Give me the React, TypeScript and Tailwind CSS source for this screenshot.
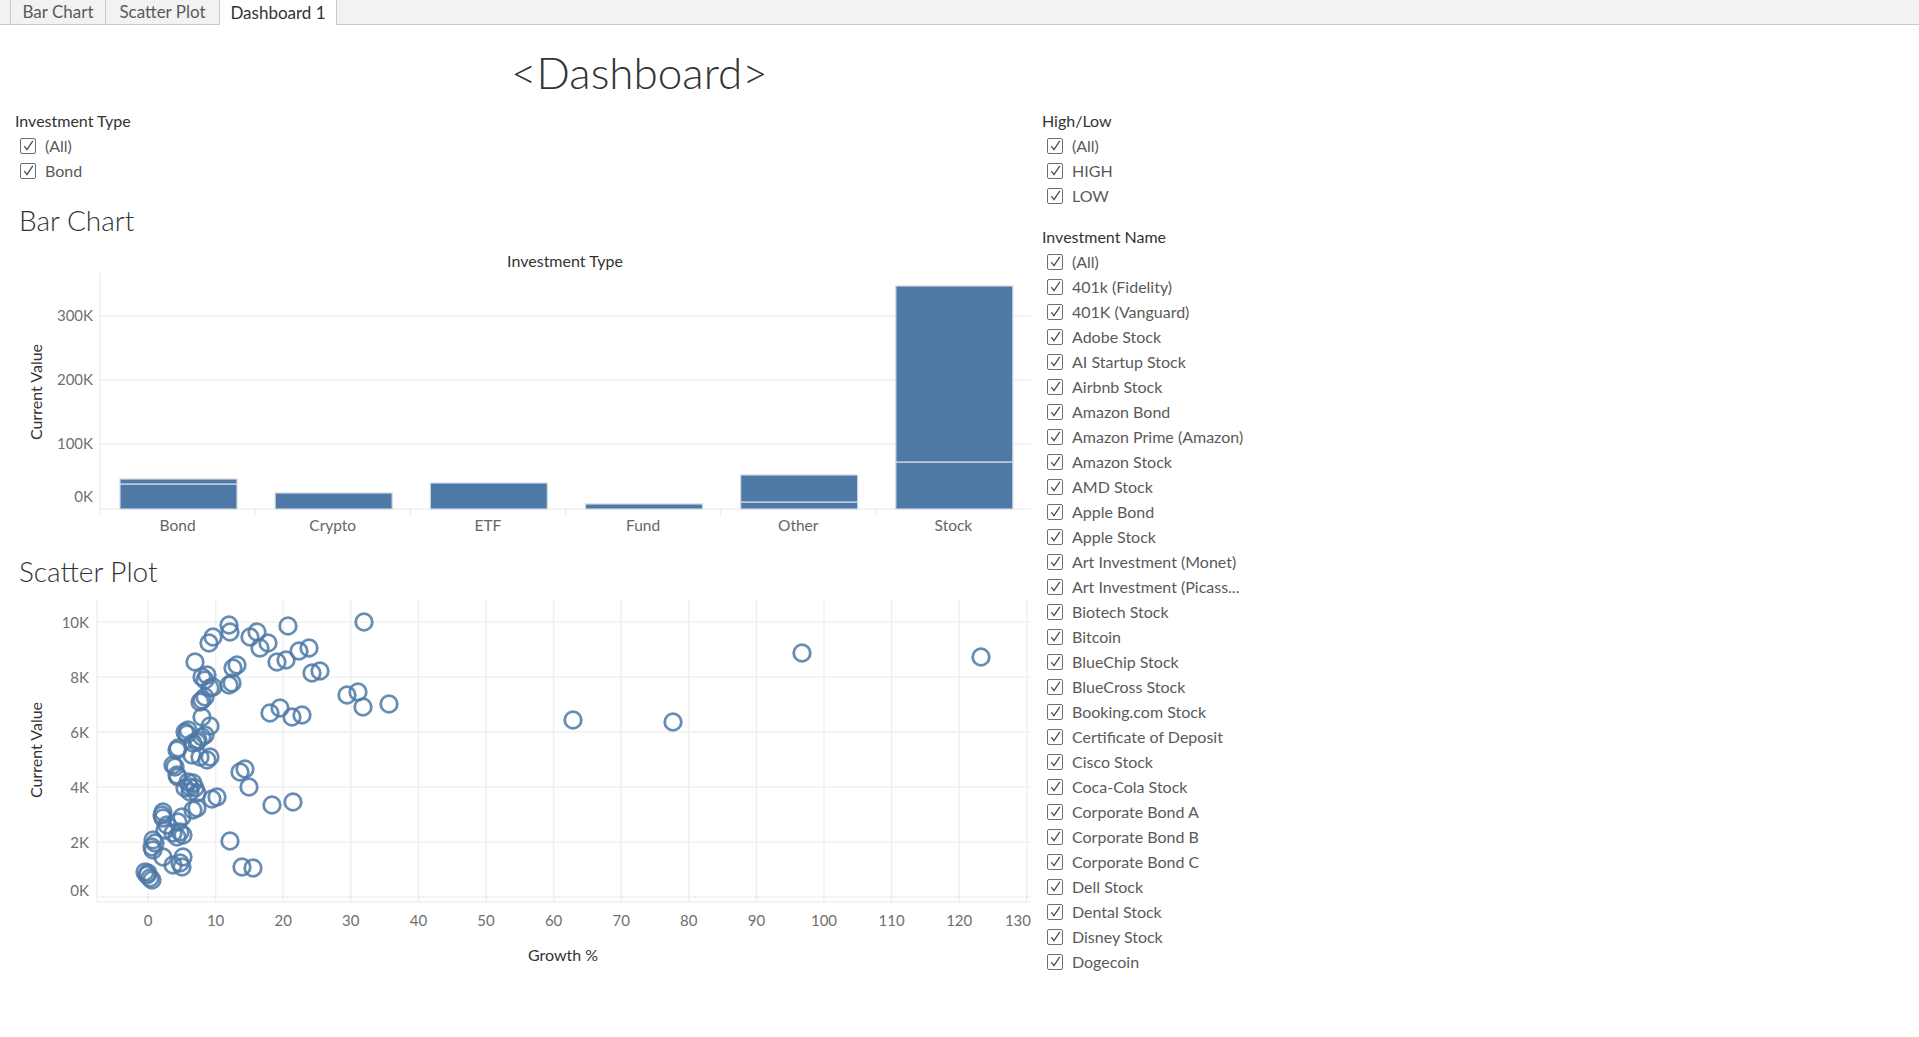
import React from "react";

const BLUE = "#4e79a7";

function CheckBox() {
  return (
    <span className="flex h-[16px] w-[16px] shrink-0 items-center justify-center rounded-[2px] border-[1.5px] border-[#6f6f6f] bg-white">
      <svg viewBox="0 0 13 13" className="h-[13px] w-[13px]">
        <path d="M2.3 7 L5 10.6 L10.8 1.8" fill="none" stroke="#4a4a4a" strokeWidth="1.25" />
      </svg>
    </span>
  );
}

function FilterRow({ label }: { label: string }) {
  return (
    <div className="flex h-[25px] items-center gap-[9px] pl-[5px]">
      <CheckBox />
      <span className="whitespace-nowrap text-[16px] text-[#5a5a5a]">{label}</span>
    </div>
  );
}

function FilterGroup({ title, items }: { title: string; items: string[] }) {
  return (
    <div className="flex flex-col">
      <div className="flex h-[25px] items-center text-[16px] text-[#333]">{title}</div>
      {items.map((it) => (
        <FilterRow key={it} label={it} />
      ))}
    </div>
  );
}

const names = [
  "(All)",
  "401k (Fidelity)",
  "401K (Vanguard)",
  "Adobe Stock",
  "AI Startup Stock",
  "Airbnb Stock",
  "Amazon Bond",
  "Amazon Prime (Amazon)",
  "Amazon Stock",
  "AMD Stock",
  "Apple Bond",
  "Apple Stock",
  "Art Investment (Monet)",
  "Art Investment (Picass...",
  "Biotech Stock",
  "Bitcoin",
  "BlueChip Stock",
  "BlueCross Stock",
  "Booking.com Stock",
  "Certificate of Deposit",
  "Cisco Stock",
  "Coca-Cola Stock",
  "Corporate Bond A",
  "Corporate Bond B",
  "Corporate Bond C",
  "Dell Stock",
  "Dental Stock",
  "Disney Stock",
  "Dogecoin",
];

// Bar chart data (values in K, stacked segments bottom -> top)
const bars: { label: string; segs: number[] }[] = [
  { label: "Bond", segs: [38.9, 7.7] },
  { label: "Crypto", segs: [24.9] },
  { label: "ETF", segs: [40.4] },
  { label: "Fund", segs: [7.8] },
  { label: "Other", segs: [10.9, 42] },
  { label: "Stock", segs: [73.1, 273.6] },
];

function BarChart() {
  // svg top corresponds to page y=237
  const base = 272;
  const pxPerK = 0.6433;
  const x0 = 100;
  const x1 = 1031;
  const catW = (x1 - x0) / 6;
  return (
    <svg width={1035} height={308} className="block">
      <text x={565} y={23} textAnchor="middle" dominantBaseline="central" fontSize={16} fill="#333">
        Investment Type
      </text>
      <text
        x={35}
        y={155}
        textAnchor="middle"
        dominantBaseline="central"
        fontSize={16}
        fill="#333"
        transform="rotate(-90 35 155)"
      >
        Current Value
      </text>
      {[79, 143, 207].map((y) => (
        <line key={y} x1={x0} x2={x1} y1={y} y2={y} stroke="#f0f0f0" strokeWidth={1.5} />
      ))}
      <line x1={x0} x2={x0} y1={36} y2={278} stroke="#e8e8e8" strokeWidth={1} />
      <line x1={x0} x2={x1} y1={base} y2={base} stroke="#e8e8e8" strokeWidth={1} />
      {[1, 2, 3, 4, 5].map((i) => (
        <line key={i} x1={x0 + catW * i} x2={x0 + catW * i} y1={base} y2={278} stroke="#e8e8e8" strokeWidth={1} />
      ))}
      {[
        ["300K", 78],
        ["200K", 142],
        ["100K", 206],
        ["0K", 259],
      ].map(([t, y]) => (
        <text key={t as string} x={93} y={y as number} textAnchor="end" dominantBaseline="central" fontSize={15} fill="#707070">
          {t}
        </text>
      ))}
      {bars.map((b, i) => {
        const bx = x0 + catW * i + 20;
        let acc = 0;
        return (
          <g key={b.label}>
            {b.segs.map((s, j) => {
              const yTop = base - (acc + s) * pxPerK;
              const h = s * pxPerK;
              acc += s;
              return (
                <rect
                  key={j}
                  x={bx}
                  y={yTop}
                  width={117}
                  height={h}
                  fill={BLUE}
                  stroke="#d3d9e1"
                  strokeWidth={1.2}
                />
              );
            })}
            <text x={x0 + catW * i + catW / 2} y={288} textAnchor="middle" dominantBaseline="central" fontSize={15.5} fill="#666">
              {b.label}
            </text>
          </g>
        );
      })}
    </svg>
  );
}

// scatter points in page pixel coords (converted inside the chart)
const pts: [number, number][] = [
  [229, 625], [230, 632], [288, 626], [364, 622], [213, 637], [209, 643],
  [250, 637], [257, 632], [260, 648], [268, 643], [195, 662], [277, 662], [286, 660],
  [299, 651], [309, 648], [312, 673], [320, 671], [237, 665], [233, 668], [232, 683], [229, 685],
  [202, 677], [207, 675], [205, 680], [210, 688], [213, 687], [202, 700], [200, 702], [205, 697],
  [347, 695], [358, 692], [363, 707], [389, 704], [202, 717], [210, 726],
  [270, 713], [280, 708], [292, 717], [302, 715], [185, 732], [188, 730], [187, 734],
  [202, 737], [205, 735], [198, 740], [193, 743], [197, 742], [178, 748], [177, 750],
  [192, 755], [200, 757], [207, 760], [210, 757], [173, 765], [175, 767], [177, 775], [178, 777],
  [240, 772], [245, 769], [249, 787], [188, 782], [193, 783], [190, 787], [185, 788], [195, 788],
  [190, 792], [197, 793], [212, 799], [217, 797], [272, 805], [293, 802],
  [163, 812], [162, 815], [163, 818], [182, 817], [178, 822], [193, 810], [197, 808],
  [167, 825], [165, 830], [173, 833], [177, 837], [180, 832], [183, 835], [230, 841],
  [153, 840], [155, 843], [152, 847], [153, 850], [163, 857], [173, 865], [180, 863], [183, 857], [182, 867],
  [242, 867], [253, 868], [145, 872], [147, 875], [150, 878], [148, 873], [152, 880],
  [573, 720], [673, 722], [802, 653], [981, 657],
];

function ScatterChart() {
  // svg top corresponds to page y=588
  const off = 588;
  const gx = (g: number) => 148 + 6.76 * g;
  const vy = (v: number) => 309 - 0.0275 * v;
  const xTicks = Array.from({ length: 14 }, (_, i) => i * 10);
  const yTicks = [2000, 4000, 6000, 8000, 10000];
  return (
    <svg width={1035} height={387} className="block">
      <text
        x={35}
        y={162}
        textAnchor="middle"
        dominantBaseline="central"
        fontSize={16}
        fill="#333"
        transform="rotate(-90 35 162)"
      >
        Current Value
      </text>
      {yTicks.map((v) => (
        <line key={v} x1={97} x2={1031} y1={vy(v)} y2={vy(v)} stroke="#f0f0f0" strokeWidth={1.5} />
      ))}
      {xTicks.slice(1).map((g) => (
        <line key={g} x1={gx(g)} x2={gx(g)} y1={12} y2={314} stroke="#f0f0f0" strokeWidth={1.5} />
      ))}
      <line x1={gx(0)} x2={gx(0)} y1={12} y2={314} stroke="#d6d6d6" strokeWidth={1} strokeDasharray="1 1" />
      <line x1={97} x2={1031} y1={vy(0)} y2={vy(0)} stroke="#d6d6d6" strokeWidth={1} strokeDasharray="1 1" />
      <line x1={97} x2={97} y1={12} y2={314} stroke="#e8e8e8" strokeWidth={1} />
      <line x1={97} x2={1031} y1={314} y2={314} stroke="#e8e8e8" strokeWidth={1} />
      {[
        ["10K", vy(10000)],
        ["8K", vy(8000)],
        ["6K", vy(6000)],
        ["4K", vy(4000)],
        ["2K", vy(2000)],
        ["0K", 302],
      ].map(([t, y]) => (
        <text key={t as string} x={89} y={y as number} textAnchor="end" dominantBaseline="central" fontSize={15} fill="#707070">
          {t}
        </text>
      ))}
      {xTicks.map((g) => (
        <text
          key={g}
          x={g === 130 ? 1031 : gx(g)}
          y={332}
          textAnchor={g === 130 ? "end" : "middle"}
          dominantBaseline="central"
          fontSize={15}
          fill="#707070"
        >
          {g}
        </text>
      ))}
      <text x={563} y={366} textAnchor="middle" dominantBaseline="central" fontSize={16} fill="#333">
        Growth %
      </text>
      {pts.map(([x, y], i) => (
        <circle key={i} cx={x} cy={y - off} r={8.3} fill="none" stroke={BLUE} strokeWidth={2.8} strokeOpacity={0.85} />
      ))}
    </svg>
  );
}

export default function App() {
  return (
    <div className="flex h-[1037px] w-[1919px] flex-col overflow-hidden bg-white [font-family:Lato,'Noto_Sans',sans-serif]">
      {/* Tab strip */}
      <div className="flex h-[25px] shrink-0 items-stretch border-b border-[#c9c9c9] bg-[#f2f2f2] pl-[10px]">
        <div className="flex w-[96px] items-center justify-center border-l border-r border-[#c9c9c9] text-[17px] text-[#5a5a5a]">
          Bar Chart
        </div>
        <div className="flex w-[114px] items-center justify-center border-r border-[#c9c9c9] text-[17px] text-[#5a5a5a]">
          Scatter Plot
        </div>
        <div className="-mb-px flex w-[117px] items-center justify-center border-r border-[#c9c9c9] bg-white text-[17px] text-[#333]">
          Dashboard 1
        </div>
      </div>

      <div className="flex flex-1">
        {/* Left column */}
        <div className="flex w-[1035px] shrink-0 flex-col">
          <div className="mt-[21px] h-[52px] pl-[511px] text-[44px] font-light leading-[52px] text-[#333]">
            &lt;Dashboard&gt;
          </div>
          <div className="mt-[10px] pl-[15px]">
            <FilterGroup title="Investment Type" items={["(All)", "Bond"]} />
          </div>
          <div className="mt-[20px] h-[34px] pl-[19px] text-[28px] font-light leading-[34px] text-[#333]">
            Bar Chart
          </div>
          <BarChart />
          <div className="mt-[9px] h-[34px] pl-[19px] text-[28px] font-light leading-[34px] text-[#333]">
            Scatter Plot
          </div>
          <ScatterChart />
        </div>

        {/* Right column: filters */}
        <div className="flex flex-col pl-[7px] pt-[83px]">
          <FilterGroup title="High/Low" items={["(All)", "HIGH", "LOW"]} />
          <div className="mt-[16px]">
            <FilterGroup title="Investment Name" items={names} />
          </div>
        </div>
      </div>
    </div>
  );
}
